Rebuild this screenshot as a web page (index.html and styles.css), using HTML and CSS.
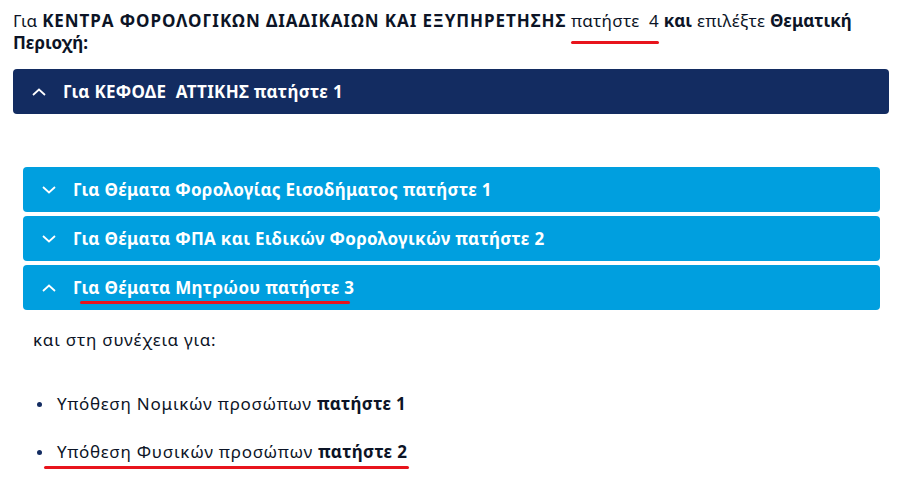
FILE: index.html
```html
<!DOCTYPE html>
<html lang="el">
<head>
<meta charset="utf-8">
<link rel="stylesheet" href="styles.css">
</head>
<body>
<div class="page">
  <p class="intro">Για <b class="caps">ΚΕΝΤΡΑ ΦΟΡΟΛΟΓΙΚΩΝ ΔΙΑΔΙΚΑΙΩΝ ΚΑΙ ΕΞΥΠΗΡΕΤΗΣΗΣ</b> <span class="mark m1">πατήστε&nbsp; 4</span> <b>και</b> επιλέξτε <b>Θεματική</b> <b>Περιοχή:</b></p>

  <div class="bar bar-dark">
    <svg class="chev" viewBox="0 0 14 8" width="14" height="8"><polyline points="1,7 7,1.5 13,7" fill="none" stroke="#fff" stroke-width="1.8"/></svg>
    <span class="bar-title">Για ΚΕΦΟΔΕ&nbsp; ΑΤΤΙΚΗΣ πατήστε 1</span>
  </div>

  <div class="inner">
    <div class="stack">
      <div class="bar bar-light">
        <svg class="chev" viewBox="0 0 14 8" width="14" height="8"><polyline points="1,1 7,6.5 13,1" fill="none" stroke="#fff" stroke-width="1.8"/></svg>
        <span class="bar-title">Για Θέματα Φορολογίας Εισοδήματος πατήστε 1</span>
      </div>
      <div class="bar bar-light">
        <svg class="chev" viewBox="0 0 14 8" width="14" height="8"><polyline points="1,1 7,6.5 13,1" fill="none" stroke="#fff" stroke-width="1.8"/></svg>
        <span class="bar-title">Για Θέματα ΦΠΑ και Ειδικών Φορολογικών πατήστε 2</span>
      </div>
      <div class="bar bar-light">
        <svg class="chev" viewBox="0 0 14 8" width="14" height="8"><polyline points="1,7 7,1.5 13,7" fill="none" stroke="#fff" stroke-width="1.8"/></svg>
        <span class="bar-title mark m2">Για Θέματα Μητρώου πατήστε 3</span>
      </div>
    </div>

    <div class="content">
      <p class="lead">και στη συνέχεια για:</p>
      <ul class="list">
        <li>Υπόθεση Νομικών προσώπων <b>πατήστε 1</b></li>
        <li><span class="mark m3">Υπόθεση Φυσικών προσώπων <b>πατήστε 2</b></span></li>
      </ul>
    </div>
  </div>
</div>
</body>
</html>
```

FILE: styles.css
```css
* { box-sizing: border-box; }
html, body { margin: 0; padding: 0; background: #fff; }
body {
  font-family: "Noto Sans", "Open Sans", sans-serif;
  color: #0c1426;
  font-size: 17px;
}
.page {
  width: 876px;
  margin-left: 13px;
  padding-top: 10px;
}
.intro {
  margin: 0 0 15px 0;
  line-height: 22px;
  font-size: 17px;
  letter-spacing: 0.3px;
}
.intro b { font-weight: 700; letter-spacing: 0; }
.intro b.caps { letter-spacing: 0.95px; }
.bar {
  display: flex;
  align-items: center;
  height: 45px;
  padding-left: 19px;
  border-radius: 4px;
  color: #fff;
}
.bar-dark { background: #132c61; }
.bar-light { background: #009fdf; }
.chev { flex: none; margin-right: 17px; }
.bar-title {
  font-weight: 700;
  font-size: 17px;
  letter-spacing: 0.3px;
}
.inner {
  padding: 53px 9px 0 10px;
}
.stack {
  display: flex;
  flex-direction: column;
  gap: 4px;
}
.content {
  padding-left: 10px;
}
.lead {
  margin: 19px 0 0 0;
  line-height: 22px;
  font-size: 17px;
  letter-spacing: 0.75px;
}
.list {
  margin: 42px 0 0 0;
  padding-left: 24px;
  list-style: none;
}
.list li {
  position: relative;
  line-height: 22px;
  margin-bottom: 26px;
  font-size: 17px;
  letter-spacing: 0.75px;
}
.list li b { letter-spacing: 0.3px; }
.list li::before {
  content: "";
  position: absolute;
  left: -20px;
  top: 9px;
  width: 5px;
  height: 5px;
  border-radius: 50%;
  background: #132c61;
}
.mark { position: relative; }
.mark::after {
  content: "";
  position: absolute;
  height: 3px;
  border-radius: 2px;
  background: #e8141c;
}
.m1::after { left: 0; right: 0; bottom: -12px; }
.m2::after { left: 7px; right: 4px; bottom: -5px; }
.m3::after { left: -13px; right: -2px; bottom: -6px; }
```
